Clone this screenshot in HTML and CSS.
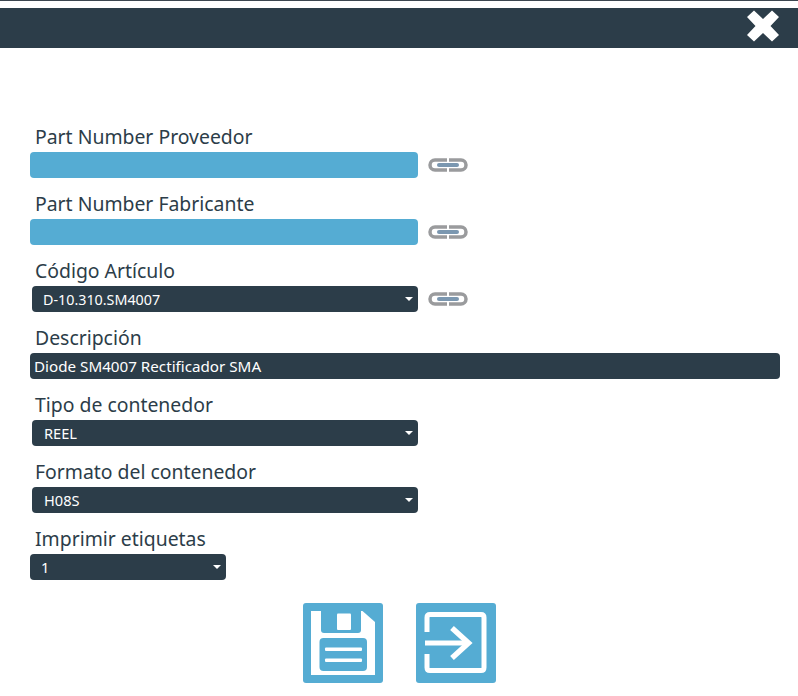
FILE: index.html
```html
<!DOCTYPE html>
<html lang="es">
<head>
<meta charset="utf-8">
<title>Etiquetas</title>
<link rel="stylesheet" href="styles.css">
</head>
<body>
<div class="topline"></div>
<header class="bar">
  <button class="close" aria-label="Cerrar">
    <svg width="34" height="32" viewBox="0 0 34 32"><path d="M8 0.5 L17 9 L26 0.5 L33 7 L24.5 16 L33 25 L26 31.5 L17 23 L8 31.5 L1 25 L9.5 16 L1 7 Z" fill="#fff"/></svg>
  </button>
</header>
<form class="form">
  <div class="field">
    <label class="label">Part Number Proveedor</label>
    <div class="row">
      <input class="input blue wide" type="text">
      <svg class="link" width="40" height="16" viewBox="0 0 40 16"><path d="M19 3 H7 a5 5 0 0 0 0 10 H19" class="ring"/><path d="M21 3 H33 a5 5 0 0 1 0 10 H21" class="ring"/><rect x="9" y="6" width="22" height="4" rx="2" class="bar-link"/></svg>
    </div>
  </div>
  <div class="field">
    <label class="label">Part Number Fabricante</label>
    <div class="row">
      <input class="input blue wide" type="text">
      <svg class="link" width="40" height="16" viewBox="0 0 40 16"><path d="M19 3 H7 a5 5 0 0 0 0 10 H19" class="ring"/><path d="M21 3 H33 a5 5 0 0 1 0 10 H21" class="ring"/><rect x="9" y="6" width="22" height="4" rx="2" class="bar-link"/></svg>
    </div>
  </div>
  <div class="field">
    <label class="label">Código Artículo</label>
    <div class="row">
      <div class="select inset code"><select><option>D-10.310.SM4007</option></select></div>
      <svg class="link" width="40" height="16" viewBox="0 0 40 16"><path d="M19 3 H7 a5 5 0 0 0 0 10 H19" class="ring"/><path d="M21 3 H33 a5 5 0 0 1 0 10 H21" class="ring"/><rect x="9" y="6" width="22" height="4" rx="2" class="bar-link"/></svg>
    </div>
  </div>
  <div class="field">
    <label class="label">Descripción</label>
    <div class="row">
      <input class="input dark full" type="text" value="Diode SM4007 Rectificador SMA">
    </div>
  </div>
  <div class="field">
    <label class="label">Tipo de contenedor</label>
    <div class="row">
      <div class="select inset pad"><select><option>REEL</option></select></div>
    </div>
  </div>
  <div class="field">
    <label class="label">Formato del contenedor</label>
    <div class="row">
      <div class="select inset pad"><select><option>H08S</option></select></div>
    </div>
  </div>
  <div class="field">
    <label class="label">Imprimir etiquetas</label>
    <div class="row">
      <div class="select small"><select><option>1</option></select></div>
    </div>
  </div>
  <div class="actions">
    <button class="action" type="button" aria-label="Guardar">
      <svg width="80" height="80" viewBox="0 0 80 80">
        <path d="M8 8 H59.5 L72 19 V72 H8 Z" fill="#fff"/>
        <path d="M18 8 H58 V27 Q58 30 55 30 H21 Q18 30 18 27 Z" fill="#55acd3"/>
        <rect x="34" y="10.5" width="14" height="16.5" rx="1" fill="#fff"/>
        <rect x="16.5" y="35" width="47.5" height="33" rx="4" fill="#55acd3"/>
        <rect x="22" y="44.5" width="37" height="3.5" rx="1" fill="#fff"/>
        <rect x="22" y="55.5" width="37" height="3.5" rx="1" fill="#fff"/>
      </svg>
    </button>
    <button class="action" type="button" aria-label="Salir">
      <svg width="80" height="80" viewBox="0 0 80 80" fill="none" stroke="#fff">
        <path d="M11 29 V14.5 Q11 11.5 14 11.5 H65 Q68 11.5 68 14.5 V64.5 Q68 67.5 65 67.5 H14 Q11 67.5 11 64.5 V51" stroke-width="5"/>
        <path d="M9 40 H52" stroke-width="5"/>
        <path d="M36 25 L52.5 40 L36 55" stroke-width="5.5"/>
      </svg>
    </button>
  </div>
</form>
</body>
</html>
```

FILE: styles.css
```css
* { box-sizing: border-box; }
html, body { margin: 0; padding: 0; background: #fff; }
body { font-family: "Noto Sans", "Open Sans", sans-serif; color: #2c3d49; height: 696px; overflow: hidden; }
.topline { height: 1px; background: #3c4650; margin-bottom: 7px; }
.bar { height: 40px; background: #2c3d49; display: flex; justify-content: flex-end; align-items: flex-start; padding-right: 18px; }
.close { width: 34px; height: 32px; padding: 0; margin-top: 2px; border: 0; background: none; display: block; }
.close svg { display: block; }
.form { padding: 90px 18px 0 30px; display: flex; flex-direction: column; }
.field { height: 67px; display: flex; flex-direction: column; justify-content: flex-end; padding-bottom: 15px; }
.field:first-child { height: 55px; }
.label { display: block; font-size: 19.4px; line-height: 26px; height: 26px; padding-left: 5px; margin-bottom: 2px; color: #2c3d49; }
.row { display: flex; align-items: center; height: 26px; }
.input { height: 26px; border: 0; border-radius: 4px; font: inherit; font-size: 15.2px; padding: 0 4px; outline: none; display: block; }
.blue { background: #55acd3; }
.dark { background: #2c3d49; color: #fff; }
.wide { width: 388px; }
.full { width: 750px; }
.select { position: relative; height: 26px; }
.select select { appearance: none; -webkit-appearance: none; width: 100%; height: 26px; border: 0; border-radius: 4px; background: #2c3d49; color: #fff; font: inherit; font-size: 14.6px; padding: 0 0 0 11px; outline: none; display: block; }
.select::after { content: ""; position: absolute; right: 5px; top: 11px; border-left: 4px solid transparent; border-right: 4px solid transparent; border-top: 4px solid #fff; pointer-events: none; }
.inset { width: 386px; margin-left: 2px; }
.code select { font-size: 14.3px; }
.pad select { padding-left: 12px; }
.small { width: 196px; }
.link { margin-left: 10px; display: block; flex: none; }
.ring { fill: none; stroke: #9a9b9d; stroke-width: 3.5; }
.bar-link { fill: #7b97b0; }
.actions { display: flex; gap: 33px; padding-left: 273px; margin-top: 8px; }
.action { width: 80px; height: 80px; padding: 0; border: 0; border-radius: 3px; background: #55acd3; display: block; }
.action svg { display: block; }
```
